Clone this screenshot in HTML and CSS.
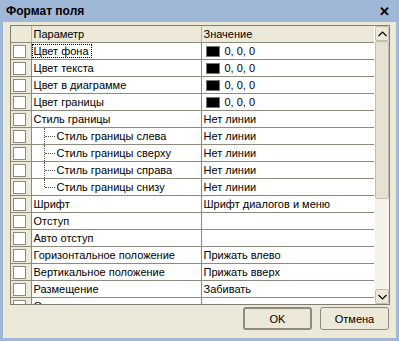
FILE: index.html
```html
<!DOCTYPE html>
<html lang="ru">
<head>
  <meta charset="UTF-8">
  <title>Формат поля</title>
  <link rel="stylesheet" href="styles.css">
</head>
<body>
  <div class="window">
    <div class="titlebar">
      <span class="title">Формат поля</span>
      <span class="close">✕</span>
    </div>
    <div class="client">
      <div class="grid">
        <div class="grid-body">
          <table class="props">
            <colgroup>
              <col class="c-check">
              <col class="c-name">
              <col class="c-value">
            </colgroup>
            <tr class="head">
              <th></th>
              <th>Параметр</th>
              <th>Значение</th>
            </tr>
            <tr>
              <td class="chk"><span class="box"></span></td>
              <td><span class="focus">Цвет фона</span></td>
              <td><span class="swatch"></span>0, 0, 0</td>
            </tr>
            <tr>
              <td class="chk"><span class="box"></span></td>
              <td>Цвет текста</td>
              <td><span class="swatch"></span>0, 0, 0</td>
            </tr>
            <tr>
              <td class="chk"><span class="box"></span></td>
              <td>Цвет в диаграмме</td>
              <td><span class="swatch"></span>0, 0, 0</td>
            </tr>
            <tr>
              <td class="chk"><span class="box"></span></td>
              <td>Цвет границы</td>
              <td><span class="swatch"></span>0, 0, 0</td>
            </tr>
            <tr>
              <td class="chk"><span class="box"></span></td>
              <td>Стиль границы</td>
              <td>Нет линии</td>
            </tr>
            <tr>
              <td class="chk"><span class="box"></span></td>
              <td class="child">Стиль границы слева</td>
              <td>Нет линии</td>
            </tr>
            <tr>
              <td class="chk"><span class="box"></span></td>
              <td class="child">Стиль границы сверху</td>
              <td>Нет линии</td>
            </tr>
            <tr>
              <td class="chk"><span class="box"></span></td>
              <td class="child">Стиль границы справа</td>
              <td>Нет линии</td>
            </tr>
            <tr>
              <td class="chk"><span class="box"></span></td>
              <td class="child last">Стиль границы снизу</td>
              <td>Нет линии</td>
            </tr>
            <tr>
              <td class="chk"><span class="box"></span></td>
              <td>Шрифт</td>
              <td>Шрифт диалогов и меню</td>
            </tr>
            <tr>
              <td class="chk"><span class="box"></span></td>
              <td>Отступ</td>
              <td></td>
            </tr>
            <tr>
              <td class="chk"><span class="box"></span></td>
              <td>Авто отступ</td>
              <td></td>
            </tr>
            <tr>
              <td class="chk"><span class="box"></span></td>
              <td>Горизонтальное положение</td>
              <td>Прижать влево</td>
            </tr>
            <tr>
              <td class="chk"><span class="box"></span></td>
              <td>Вертикальное положение</td>
              <td>Прижать вверх</td>
            </tr>
            <tr>
              <td class="chk"><span class="box"></span></td>
              <td>Размещение</td>
              <td>Забивать</td>
            </tr>
            <tr>
              <td class="chk"><span class="box"></span></td>
              <td>Ограничение</td>
              <td></td>
            </tr>
          </table>
        </div>
        <div class="scrollbar">
          <div class="sb-btn">
            <svg width="9" height="6" viewBox="0 0 9 6"><path d="M0.5 5 L4.5 1 L8.5 5" fill="none" stroke="#000" stroke-width="1.2"/></svg>
          </div>
          <div class="sb-track">
            <div class="sb-thumb"></div>
          </div>
          <div class="sb-btn">
            <svg width="9" height="6" viewBox="0 0 9 6"><path d="M0.5 1 L4.5 5 L8.5 1" fill="none" stroke="#000" stroke-width="1.2"/></svg>
          </div>
        </div>
      </div>
      <div class="buttons">
        <button class="btn default">OK</button>
        <button class="btn">Отмена</button>
      </div>
    </div>
  </div>
</body>
</html>
```

FILE: styles.css
```css
html, body {
  margin: 0;
  padding: 0;
}
body {
  font-family: "Liberation Sans", Arial, sans-serif;
  font-size: 11px;
  color: #000;
  background: #9fb8d8;
}
.window {
  width: 399px;
  height: 341px;
  box-sizing: border-box;
  background: #9fb8d8;
  padding: 0 3px 3px 3px;
  display: flex;
  flex-direction: column;
}
.titlebar {
  height: 22px;
  display: flex;
  align-items: center;
  justify-content: space-between;
  padding: 0 6px 0 3px;
}
.title {
  font-weight: bold;
  font-size: 12px;
}
.close {
  font-weight: bold;
  font-size: 13px;
}
.client {
  flex: 1;
  background: #ece9d8;
  padding: 3px 6px 0 7px;
  display: flex;
  flex-direction: column;
}
.grid {
  height: 280px;
  box-sizing: border-box;
  border: 1px solid #7f7d73;
  background: #ece9d8;
  display: flex;
}
.grid-body {
  flex: 1;
  overflow: hidden;
  background: #fff;
}
.props {
  border-collapse: collapse;
  table-layout: fixed;
  width: 100%;
}
.c-check { width: 20px; }
.c-name { width: 170px; }
.props th, .props td {
  height: 16px;
  padding: 0 0 0 2px;
  border: 1px solid #8e8b7e;
  border-top: none;
  white-space: nowrap;
  overflow: hidden;
  text-align: left;
  font-weight: normal;
  line-height: 16px;
}
.props tr > :first-child { border-left: none; }
.props tr > :last-child { border-right: none; }
.props th {
  background: #ece9d8;
  border-color: #b8b4a4;
  border-bottom-color: #8e8b7e;
}
.props td.chk {
  background: #ece9d8;
  padding: 0 0 0 2px;
}
.box {
  display: block;
  width: 11px;
  height: 11px;
  border: 1px solid #8e8b7e;
  background: #fff;
}
.focus {
  outline: 1px dotted #000;
  outline-offset: 0;
  padding: 0 2px 0 1px;
  margin-left: -1px;
}
.swatch {
  display: inline-block;
  width: 14px;
  height: 11px;
  background: #000;
  border: 1px solid #777;
  box-sizing: border-box;
  vertical-align: -2px;
  margin: 0 5px 0 2px;
}
.child {
  position: relative;
  padding-left: 25px !important;
}
.child::before {
  content: "";
  position: absolute;
  left: 12px;
  top: 0;
  bottom: 0;
  border-left: 1px dotted #555;
}
.child.last::before {
  bottom: 8px;
}
.child::after {
  content: "";
  position: absolute;
  left: 13px;
  width: 10px;
  top: 8px;
  border-top: 1px dotted #555;
}
.scrollbar {
  width: 14px;
  display: flex;
  flex-direction: column;
  background: #f4f2ea;
  border-left: 1px solid #fff;
}
.sb-btn {
  height: 15px;
  box-sizing: border-box;
  border: 1px solid #c3bfb0;
  border-radius: 2px;
  background: #ece9d8;
  display: flex;
  align-items: center;
  justify-content: center;
}
.sb-track {
  flex: 1;
}
.sb-thumb {
  height: 158px;
  box-sizing: border-box;
  border: 1px solid #c3bfb0;
  border-radius: 2px;
  background: #e5e2d4;
}
.buttons {
  display: flex;
  justify-content: flex-end;
  gap: 8px;
  margin-top: 2px;
  padding-right: 1px;
}
.btn {
  width: 69px;
  height: 23px;
  font-family: "Liberation Sans", Arial, sans-serif;
  font-size: 11px;
  color: #000;
  background: #ece9d8;
  border: 1px solid #8e8b7e;
  border-radius: 3px;
  padding: 0;
}
.btn.default {
  border: 2px solid #8e8b7e;
}
```
